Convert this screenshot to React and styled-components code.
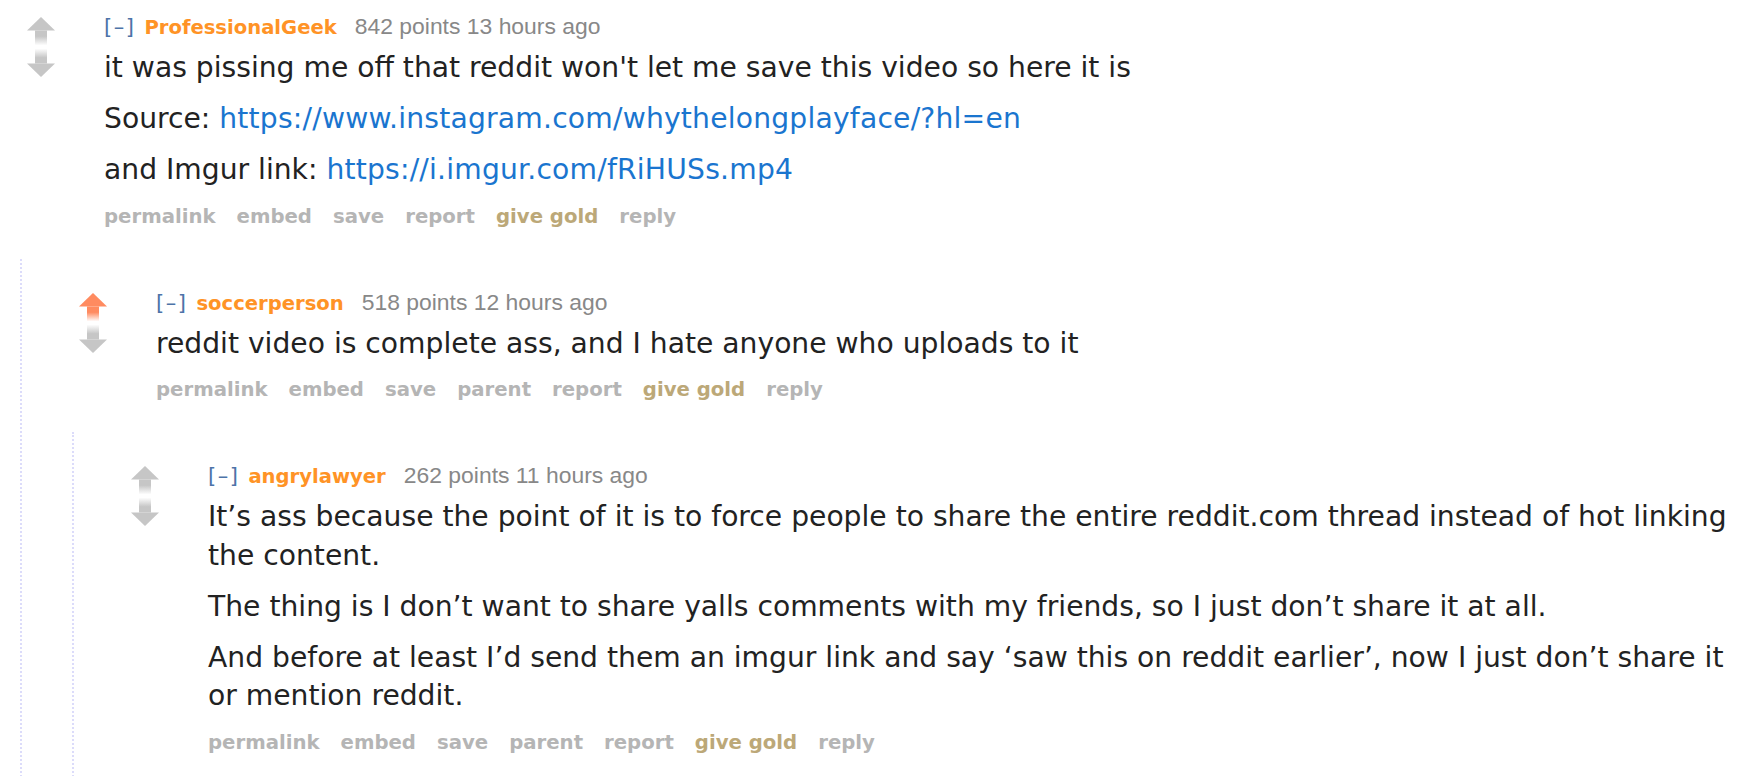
import React from "react";
import styled, { createGlobalStyle } from "styled-components";

const Global = createGlobalStyle`
  html, body { margin: 0; padding: 0; background: #ffffff; }
  body { font-family: "DejaVu Sans", Verdana, sans-serif; color: #222; overflow: hidden; }
`;

const Page = styled.div`
  padding-right: 17px;
`;

const Thread = styled.div``;

const Row = styled.div`
  display: grid;
  grid-template-columns: 30px 1fr;
  column-gap: 48px;
  padding: ${(p) => (p.$root ? "14px" : "31px")} 0 30px 26px;
`;

const Votes = styled.div`
  display: flex;
  flex-direction: column;
  gap: 4px;
  padding-top: 3px;
`;

const Entry = styled.div`
  min-width: 0;
`;

const Tagline = styled.div`
  display: flex;
  align-items: baseline;
  height: 24px;
  line-height: 24px;
  white-space: nowrap;
`;

const Collapse = styled.span`
  font-family: "DejaVu Sans", Verdana, sans-serif;
  font-size: 21px;
  letter-spacing: 1.5px;
  color: #4d73a8;
  margin-right: 9px;
`;

const Author = styled.span`
  font-family: "DejaVu Sans", Verdana, sans-serif;
  font-weight: bold;
  font-size: 19.6px;
  color: #ff9326;
  margin-right: 18px;
`;

const Score = styled.span`
  font-family: "Liberation Sans", Arial, sans-serif;
  font-size: 22.9px;
  color: #888;
`;

const Body = styled.div`
  margin-top: 11px;
  font-size: 28.2px;
  line-height: 38.5px;
  color: #222;
`;

const P = styled.p`
  margin: 0 0 12.5px;
  &:last-child { margin-bottom: 0; }
`;

const Link = styled.a`
  color: #1a75cf;
  text-decoration: none;
  letter-spacing: 0.2px;
`;

const Buttons = styled.ul`
  list-style: none;
  display: flex;
  gap: 21px;
  margin: 15px 0 0;
  padding: 0;
  height: 24px;
  line-height: 24px;
`;

const Button = styled.li`
  font-family: "DejaVu Sans", Verdana, sans-serif;
  font-weight: bold;
  font-size: 19.7px;
  color: ${(p) => (p.$gold ? "#bca878" : "#b5b5b5")};
  white-space: nowrap;
`;

const Children = styled.div`
  margin-left: 20px;
  border-left: 2px dotted #dcdcfa;
  padding-left: 30px;
`;

const ArrowSvg = styled.svg`
  display: block;
  width: 30px;
  height: 28px;
`;

function Arrow({ dir, color, id }) {
  const gid = `g-${id}`;
  if (dir === "up") {
    return (
      <ArrowSvg viewBox="0 0 30 28">
        <defs>
          <linearGradient id={gid} x1="0" y1="0" x2="0" y2="1">
            <stop offset="0" stopColor={color} stopOpacity="1" />
            <stop offset="0.4" stopColor={color} stopOpacity="1" />
            <stop offset="1" stopColor={color} stopOpacity="0.05" />
          </linearGradient>
        </defs>
        <polygon points="15,0 29,13.5 1,13.5" fill={color} />
        <rect x="9" y="13.5" width="12" height="14.5" fill={`url(#${gid})`} />
      </ArrowSvg>
    );
  }
  return (
    <ArrowSvg viewBox="0 0 30 28">
      <defs>
        <linearGradient id={gid} x1="0" y1="1" x2="0" y2="0">
          <stop offset="0" stopColor={color} stopOpacity="1" />
          <stop offset="0.4" stopColor={color} stopOpacity="1" />
          <stop offset="1" stopColor={color} stopOpacity="0.05" />
        </linearGradient>
      </defs>
      <rect x="9" y="0" width="12" height="14.5" fill={`url(#${gid})`} />
      <polygon points="1,14.5 29,14.5 15,28" fill={color} />
    </ArrowSvg>
  );
}

const GRAY = "#c6c6c6";
const ORANGE = "#ff8b60";

function Comment({ id, root, upvoted, author, score, time, actions, children }) {
  return (
    <Row $root={root}>
      <Votes>
        <Arrow dir="up" id={`${id}-u`} color={upvoted ? ORANGE : GRAY} />
        <Arrow dir="down" id={`${id}-d`} color={GRAY} />
      </Votes>
      <Entry>
        <Tagline>
          <Collapse>[–]</Collapse>
          <Author>{author}</Author>
          <Score>
            {score} points {time} hours ago
          </Score>
        </Tagline>
        <Body>{children}</Body>
        <Buttons>
          {actions.map((a) => (
            <Button key={a} $gold={a === "give gold"}>
              {a}
            </Button>
          ))}
        </Buttons>
      </Entry>
    </Row>
  );
}

export default function App() {
  return (
    <Page>
      <Global />
      <Thread>
        <Comment
          id="c1"
          root
          author="ProfessionalGeek"
          score="842"
          time="13"
          actions={["permalink", "embed", "save", "report", "give gold", "reply"]}
        >
          <P>it was pissing me off that reddit won't let me save this video so here it is</P>
          <P>
            Source: <Link href="#">https://www.instagram.com/whythelongplayface/?hl=en</Link>
          </P>
          <P>
            and Imgur link: <Link href="#">https://i.imgur.com/fRiHUSs.mp4</Link>
          </P>
        </Comment>
        <Children>
          <Comment
            id="c2"
            upvoted
            author="soccerperson"
            score="518"
            time="12"
            actions={["permalink", "embed", "save", "parent", "report", "give gold", "reply"]}
          >
            <P>reddit video is complete ass, and I hate anyone who uploads to it</P>
          </Comment>
          <Children>
            <Comment
              id="c3"
              author="angrylawyer"
              score="262"
              time="11"
              actions={["permalink", "embed", "save", "parent", "report", "give gold", "reply"]}
            >
              <P>
                It’s ass because the point of it is to force people to share the entire reddit.com thread
                instead of hot linking the content.
              </P>
              <P>
                The thing is I don’t want to share yalls comments with my friends, so I just don’t share it at
                all.
              </P>
              <P>
                And before at least I’d send them an imgur link and say ‘saw this on reddit earlier’, now I just
                don’t share it or mention reddit.
              </P>
            </Comment>
          </Children>
        </Children>
      </Thread>
    </Page>
  );
}
